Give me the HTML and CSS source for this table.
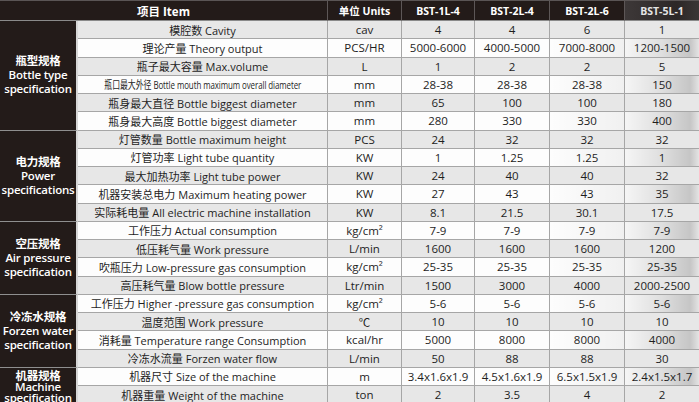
FILE: index.html
```html
<!DOCTYPE html>
<html lang="zh">
<head>
<meta charset="utf-8">
<title>Spec</title>
<link rel="stylesheet" href="styles.css">
</head>
<body>
<div class="spec">
  <div class="h h-item">项目 Item</div>
  <div class="h">单位 Units</div>
  <div class="h">BST-1L-4</div>
  <div class="h">BST-2L-4</div>
  <div class="h">BST-2L-6</div>
  <div class="h h-last">BST-5L-1</div>

  <div class="grp g6"><span>瓶型规格</span><span>Bottle type</span><span>specification</span></div>
  <div class="row alt"><div class="c item">模腔数 Cavity</div><div class="c">cav</div><div class="c">4</div><div class="c">4</div><div class="c c5">6</div><div class="c c6">1</div></div>
  <div class="row"><div class="c item">理论产量 Theory output</div><div class="c">PCS/HR</div><div class="c">5000-6000</div><div class="c">4000-5000</div><div class="c c5">7000-8000</div><div class="c c6">1200-1500</div></div>
  <div class="row alt"><div class="c item">瓶子最大容量 Max.volume</div><div class="c">L</div><div class="c">1</div><div class="c">2</div><div class="c c5">2</div><div class="c c6">5</div></div>
  <div class="row"><div class="c item"><span class="narrow">瓶口最大外径 Bottle mouth maximum overall diameter</span></div><div class="c">mm</div><div class="c">28-38</div><div class="c">28-38</div><div class="c c5">28-38</div><div class="c c6">150</div></div>
  <div class="row alt"><div class="c item">瓶身最大直径 Bottle biggest diameter</div><div class="c">mm</div><div class="c">65</div><div class="c">100</div><div class="c c5">100</div><div class="c c6">180</div></div>
  <div class="row"><div class="c item">瓶身最大高度 Bottle biggest diameter</div><div class="c">mm</div><div class="c">280</div><div class="c">330</div><div class="c c5">330</div><div class="c c6">400</div></div>

  <div class="grp g5"><span>电力规格</span><span>Power</span><span>specifications</span></div>
  <div class="row alt"><div class="c item">灯管数量 Bottle maximum height</div><div class="c">PCS</div><div class="c">24</div><div class="c">32</div><div class="c c5">32</div><div class="c c6">32</div></div>
  <div class="row"><div class="c item">灯管功率 Light tube quantity</div><div class="c">KW</div><div class="c">1</div><div class="c">1.25</div><div class="c c5">1.25</div><div class="c c6">1</div></div>
  <div class="row alt"><div class="c item">最大加热功率 Light tube power</div><div class="c">KW</div><div class="c">24</div><div class="c">40</div><div class="c c5">40</div><div class="c c6">32</div></div>
  <div class="row"><div class="c item">机器安装总电力 Maximum heating power</div><div class="c">KW</div><div class="c">27</div><div class="c">43</div><div class="c c5">43</div><div class="c c6">35</div></div>
  <div class="row alt"><div class="c item">实际耗电量 All electric machine installation</div><div class="c">KW</div><div class="c">8.1</div><div class="c">21.5</div><div class="c c5">30.1</div><div class="c c6">17.5</div></div>

  <div class="grp g4"><span>空压规格</span><span>Air pressure</span><span>specification</span></div>
  <div class="row"><div class="c item">工作压力 Actual consumption</div><div class="c">kg/cm²</div><div class="c">7-9</div><div class="c">7-9</div><div class="c c5">7-9</div><div class="c c6">7-9</div></div>
  <div class="row alt"><div class="c item">低压耗气量 Work pressure</div><div class="c">L/min</div><div class="c">1600</div><div class="c">1600</div><div class="c c5">1600</div><div class="c c6">1200</div></div>
  <div class="row"><div class="c item">吹瓶压力 Low-pressure gas consumption</div><div class="c">kg/cm²</div><div class="c">25-35</div><div class="c">25-35</div><div class="c c5">25-35</div><div class="c c6">25-35</div></div>
  <div class="row alt"><div class="c item">高压耗气量 Blow bottle pressure</div><div class="c">Ltr/min</div><div class="c">1500</div><div class="c">3000</div><div class="c c5">4000</div><div class="c c6">2000-2500</div></div>

  <div class="grp g4"><span>冷冻水规格</span><span>Forzen water</span><span>specification</span></div>
  <div class="row"><div class="c item">工作压力 Higher -pressure gas consumption</div><div class="c">kg/cm²</div><div class="c">5-6</div><div class="c">5-6</div><div class="c c5">5-6</div><div class="c c6">5-6</div></div>
  <div class="row alt"><div class="c item">温度范围 Work pressure</div><div class="c">℃</div><div class="c">10</div><div class="c">10</div><div class="c c5">10</div><div class="c c6">10</div></div>
  <div class="row"><div class="c item">消耗量 Temperature range Consumption</div><div class="c">kcal/hr</div><div class="c">5000</div><div class="c">8000</div><div class="c c5">8000</div><div class="c c6">4000</div></div>
  <div class="row alt"><div class="c item">冷冻水流量 Forzen water flow</div><div class="c">L/min</div><div class="c">50</div><div class="c">88</div><div class="c c5">88</div><div class="c c6">30</div></div>

  <div class="grp g2 tight"><span>机器规格</span><span>Machine</span><span>specification</span></div>
  <div class="row"><div class="c item">机器尺寸 Size of the machine</div><div class="c">m</div><div class="c">3.4x1.6x1.9</div><div class="c">4.5x1.6x1.9</div><div class="c c5">6.5x1.5x1.9</div><div class="c c6">2.4x1.5x1.7</div></div>
  <div class="row alt"><div class="c item">机器重量 Weight of the machine</div><div class="c">ton</div><div class="c">2</div><div class="c">3.5</div><div class="c c5">4</div><div class="c c6">2</div></div>
</div>
</body>
</html>
```

FILE: styles.css
```css
html, body {
  margin: 0;
  padding: 0;
  background: #ffffff;
}

.spec {
  display: grid;
  grid-template-columns: 78px 250px 74px 73px 75px 75px 74px;
  grid-template-rows: 20px repeat(21, 18.25px);
  width: 699px;
  font-family: "Open Sans", "Noto Sans CJK SC", sans-serif;
  color: #1e1e1e;
  border-top: 1px solid #5a5555;
  box-sizing: border-box;
}

.row {
  display: contents;
}

.h {
  background: #231b19;
  color: #ffffff;
  font-weight: 700;
  font-size: 10.5px;
  display: flex;
  align-items: center;
  justify-content: center;
  border-right: 1px solid #5d5757;
  border-bottom: 1px solid #8a8a8a;
  box-sizing: border-box;
  white-space: nowrap;
}

.h-item {
  grid-column: span 2;
  font-size: 11.5px;
}

.h-last {
  background: linear-gradient(90deg, #3d3838 0%, #2c2727 70%, #3a3636 100%);
  color: #e4e4e4;
  border-right: none;
}

.grp {
  background: #231b19;
  color: #ffffff;
  font-size: 11.5px;
  font-weight: 600;
  line-height: 14px;
  display: flex;
  flex-direction: column;
  align-items: center;
  justify-content: center;
  text-align: center;
  border-bottom: 1px solid #8f8f8f;
  border-right: 2px solid #d6d6d6;
  box-sizing: border-box;
  white-space: nowrap;
  letter-spacing: -0.2px;
  overflow: hidden;
}

.g6 { grid-row: span 6; }
.g5 { grid-row: span 5; }
.g4 { grid-row: span 4; }
.g2 { grid-row: span 2; }

.grp.tight {
  line-height: 11px;
  padding-top: 2px;
}

.c {
  background: #fdfdfd;
  font-size: 11.5px;
  display: flex;
  align-items: center;
  justify-content: center;
  border-right: 1px solid #a6a6a6;
  border-bottom: 1px solid #a6a6a6;
  box-sizing: border-box;
  white-space: nowrap;
  overflow: hidden;
}

.c.item {
  font-size: 11px;
}

.row.alt > .c {
  background: #e7e7e7;
}

.c.c5 {
  background-image: linear-gradient(90deg, rgba(0, 0, 0, 0) 0%, rgba(0, 0, 0, 0.05) 100%);
}

.c.c6 {
  border-right: none;
  background-image: linear-gradient(90deg, rgba(0, 0, 0, 0.03) 0%, rgba(0, 0, 0, 0.12) 50%, rgba(0, 0, 0, 0.22) 88%, rgba(0, 0, 0, 0.1) 100%);
}

.narrow {
  display: inline-block;
  transform: scaleX(0.72);
  letter-spacing: -0.1px;
}
```
